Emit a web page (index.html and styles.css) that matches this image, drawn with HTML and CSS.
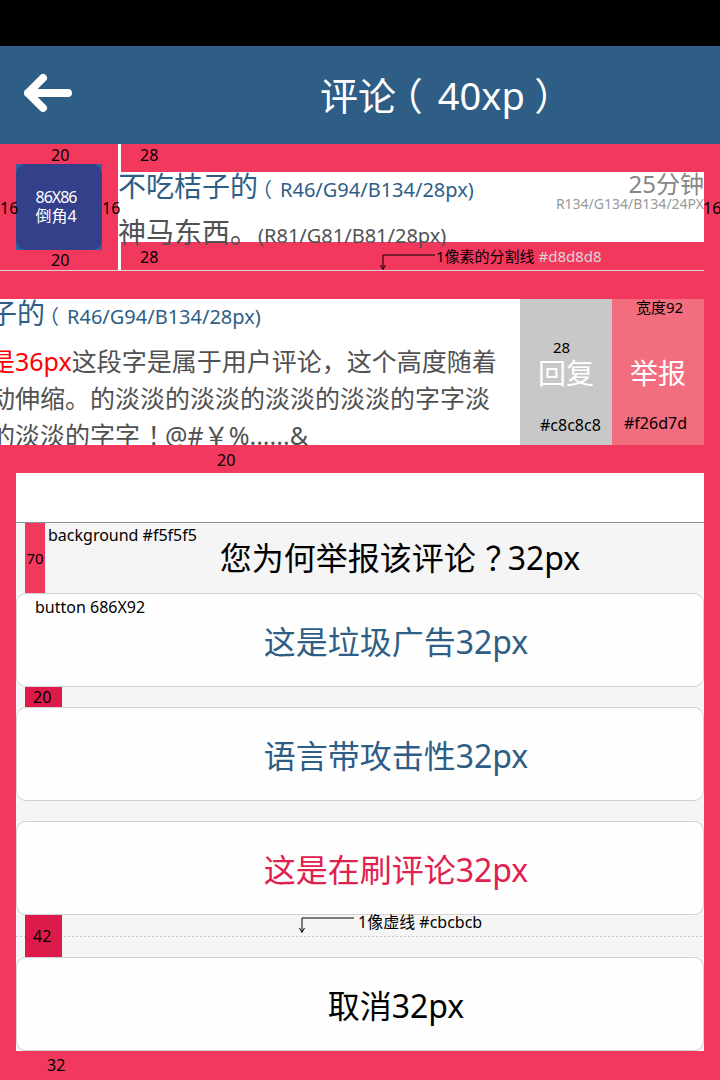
FILE: index.html
```html
<!DOCTYPE html>
<html lang="zh-CN">
<head>
<meta charset="utf-8">
<title>评论（40xp）</title>
<link rel="stylesheet" href="styles.css">
</head>
<body>
<div class="statusbar"></div>
<header class="topbar">
  <svg class="back" viewBox="0 0 48 40" width="48" height="40" aria-hidden="true">
    <path d="M4 20 H44 M19 5 L4 20 L19 35" fill="none" stroke="#fff" stroke-width="8" stroke-linecap="round" stroke-linejoin="round"/>
  </svg>
  <h1 class="title">评论<span class="p-open">（</span>40xp<span class="p-close">）</span></h1>
</header>

<section class="c1">
  <div class="avatar-col">
    <div class="avatar"><div class="avatar-inner"><span class="av-size">86X86</span><span>倒角4</span></div></div>
  </div>
  <div class="c1-main">
    <div class="c1-box">
      <div class="c1-left">
        <div class="c1-name">不吃桔子的<span class="sub"><span class="p-open">（</span>R46/G94/B134/28px)</span></div>
        <div class="c1-text">神马东西。<span class="sub">(R81/G81/B81/28px)</span></div>
      </div>
      <div class="c1-right">
        <div class="time">25分钟</div>
        <div class="time-note">R134/G134/B134/24PX</div>
      </div>
    </div>
  </div>
  <span class="note n-a1">20</span>
  <span class="note n-a2">16</span>
  <span class="note n-a3">16</span>
  <span class="note n-a4">20</span>
  <span class="note n-a5">28</span>
  <span class="note n-a6">28</span>
  <span class="note n-a7">16</span>
  <svg class="arrow arrow-1" width="58" height="18" viewBox="0 0 58 18" aria-hidden="true">
    <polyline points="55,1 3,1 3,15" fill="none" stroke="#000" stroke-width="1"/>
    <polyline points="0.5,11 3,15.5 5.5,11" fill="none" stroke="#000" stroke-width="1"/>
  </svg>
  <span class="note n-div">1像素的分割线 <span class="light">#d8d8d8</span></span>
</section>
<div class="divider"></div>

<section class="c2">
  <div class="c2-main">
    <div class="c2-name">不吃桔子的<span class="sub"><span class="p-open">（</span>R46/G94/B134/28px)</span></div>
    <div class="c2-text">
      <div><span class="red">是36px</span>这段字是属于用户评论，这个高度随着</div>
      <div>动伸缩。的淡淡的淡淡的淡淡的淡淡的字字淡</div>
      <div>的淡淡的字字<span class="p-mid">！</span>@#￥%......&amp;</div>
    </div>
  </div>
  <div class="act act-reply">回复</div>
  <div class="act act-report">举报</div>
  <span class="note n-b1">28</span>
  <span class="note n-b2">#c8c8c8</span>
  <span class="note n-b3">宽度92</span>
  <span class="note n-b4">#f26d7d</span>
  <span class="note n-b5">20</span>
</section>

<section class="dialog">
  <div class="dlg-head"></div>
  <div class="dlg-body">
    <div class="dlg-title">您为何举报该评论<span class="p-mid">？</span>32px</div>
    <div class="opt">这是垃圾广告32px</div>
    <div class="opt">语言带攻击性32px</div>
    <div class="opt opt-red">这是在刷评论32px</div>
    <div class="dotted-gap"><span class="dots"></span></div>
    <div class="opt opt-cancel">取消32px</div>

    <span class="tag tag-70">70</span>
    <span class="note n-d1">background #f5f5f5</span>
    <span class="note n-d2">button 686X92</span>
    <span class="tag tag-20">20</span>
    <span class="tag tag-42">42</span>
    <svg class="arrow arrow-2" width="58" height="18" viewBox="0 0 58 18" aria-hidden="true">
      <polyline points="55,1 3,1 3,15" fill="none" stroke="#000" stroke-width="1"/>
      <polyline points="0.5,11 3,15.5 5.5,11" fill="none" stroke="#000" stroke-width="1"/>
    </svg>
    <span class="note n-d3">1像虚线 #cbcbcb</span>
  </div>
</section>

<footer class="foot">
  <span class="note n-f">32</span>
</footer>
</body>
</html>
```

FILE: styles.css
```css
* { box-sizing: border-box; margin: 0; padding: 0; }
html, body { width: 720px; height: 1080px; overflow: hidden; }
body {
  background: #f3385e;
  font-family: "Noto Sans", "Noto Sans CJK SC", sans-serif;
  color: #000;
}

/* full-width punctuation centred in its box */
.p-open { margin-left: -0.3em; margin-right: 0.4em; }
.p-close { margin-left: 0.25em; }
.p-mid { margin-left: 0.3em; margin-right: -0.3em; }

.statusbar { height: 46px; background: #000; }
.topbar {
  height: 98px;
  background: #2e5e86;
  display: flex;
  align-items: flex-start;
}
.back { flex: none; margin: 27px 0 0 24px; width: 48px; height: 40px; }
.title {
  margin-left: 248px;
  font-size: 38px;
  font-weight: 400;
  line-height: 98px;
  color: #fff;
  white-space: nowrap;
}

/* annotations */
.note {
  position: absolute;
  font-size: 16px;
  line-height: 18px;
  color: #000;
  white-space: nowrap;
}
.arrow { position: absolute; }
.light { color: #d8d8d8; }

/* comment 1 */
.c1 { position: relative; display: flex; height: 126px; padding-right: 16px; }
.avatar-col { flex: none; width: 118px; padding: 20px 16px; }
.avatar { width: 86px; height: 86px; background: #2f62a0; }
.avatar-inner {
  width: 86px; height: 86px;
  border-radius: 10px;
  background: #35408a;
  color: #fff;
  display: flex; flex-direction: column; align-items: center; justify-content: center;
  padding-right: 6px;
  font-size: 16px; line-height: 19px;
}
.av-size { letter-spacing: -1px; }
.c1-main { flex: 1; border-left: 3px solid #fff; padding: 28px 0; }
.c1-box {
  margin-left: -3px;
  height: 70px;
  background: #fff;
  display: flex;
  justify-content: space-between;
  white-space: nowrap;
}
.c1-name { font-size: 28px; line-height: 28px; color: #2e5e86; }
.c1-text { margin-top: 14px; font-size: 28px; line-height: 28px; color: #515151; }
.sub { font-size: 20px; }
.c1-right { text-align: right; }
.time { font-size: 24px; line-height: 24px; color: #868686; }
.time-note { font-size: 14px; line-height: 16px; color: #999; }

.n-a1 { left: 51px; top: 2px; }
.n-a2 { left: 0; top: 55px; }
.n-a3 { left: 102px; top: 55px; }
.n-a4 { left: 51px; top: 107px; }
.n-a5 { left: 140px; top: 2px; }
.n-a6 { left: 140px; top: 104px; }
.n-a7 { left: 703px; top: 55px; }
.arrow-1 { left: 380px; top: 110px; }
.n-div { left: 436px; top: 103px; font-size: 15px; }

.divider { height: 1px; background: #d8d8d8; margin-right: 16px; }

/* comment 2 (swiped) */
.c2 { position: relative; display: flex; height: 202px; padding: 28px 16px 28px 0; }
.c2-main { flex: 1; min-width: 0; background: #fff; overflow: hidden; white-space: nowrap; }
.c2-name { margin-left: -95px; font-size: 28px; line-height: 28px; color: #2e5e86; }
.c2-text { margin: 12px 0 0 -10px; font-size: 25px; line-height: 37px; color: #515151; }
.red { color: #ff0000; }
.act {
  flex: none; width: 92px;
  display: flex; align-items: center; justify-content: center;
  color: #fff; font-size: 28px;
}
.act-reply { background: #c8c8c8; }
.act-report { background: #f26d7d; }
.n-b1 { left: 553px; top: 67px; font-size: 15px; }
.n-b2 { left: 540px; top: 145px; }
.n-b3 { left: 636px; top: 27px; font-size: 15px; }
.n-b4 { left: 624px; top: 143px; }
.n-b5 { left: 217px; top: 180px; }

/* dialog */
.dialog { margin: 0 16px; }
.dlg-head { height: 50px; background: #fff; border-bottom: 1px solid #85929a; }
.dlg-body { position: relative; background: #f5f5f5; }
.dlg-title {
  height: 70px; line-height: 70px;
  padding-left: 80px;
  text-align: center;
  font-size: 32px; color: #000;
}
.opt {
  height: 94px;
  border: 1px solid #d2d2d2;
  border-radius: 10px;
  background: #fefefe;
  display: flex; align-items: center; justify-content: center;
  padding-left: 72px;
  font-size: 32px;
  color: #2e5e86;
}
.opt + .opt { margin-top: 20px; }
.opt-red { color: #e0214f; }
.opt-cancel { color: #000; }
.dotted-gap { height: 42px; display: flex; align-items: center; }
.dots {
  display: block; width: 100%; height: 1px;
  background: repeating-linear-gradient(to right, #cbcbcb 0 2px, transparent 2px 4px);
}

.tag {
  position: absolute;
  left: 9px;
  font-size: 16px;
  color: #000;
}
.tag-70 { top: 0; width: 20px; height: 70px; line-height: 70px; text-align: center; background: #f3385e; font-size: 15px; }
.tag-20 { top: 164px; width: 37px; height: 20px; line-height: 20px; padding-left: 8px; background: #dc1b4b; }
.tag-42 { top: 392px; width: 37px; height: 42px; line-height: 42px; padding-left: 8px; background: #dc1b4b; }
.n-d1 { left: 32px; top: 3px; }
.n-d2 { left: 19px; top: 75px; }
.arrow-2 { left: 283px; top: 394px; }
.n-d3 { left: 342px; top: 390px; }

.foot { position: relative; height: 29px; }
.n-f { left: 47px; top: 5px; }
```
